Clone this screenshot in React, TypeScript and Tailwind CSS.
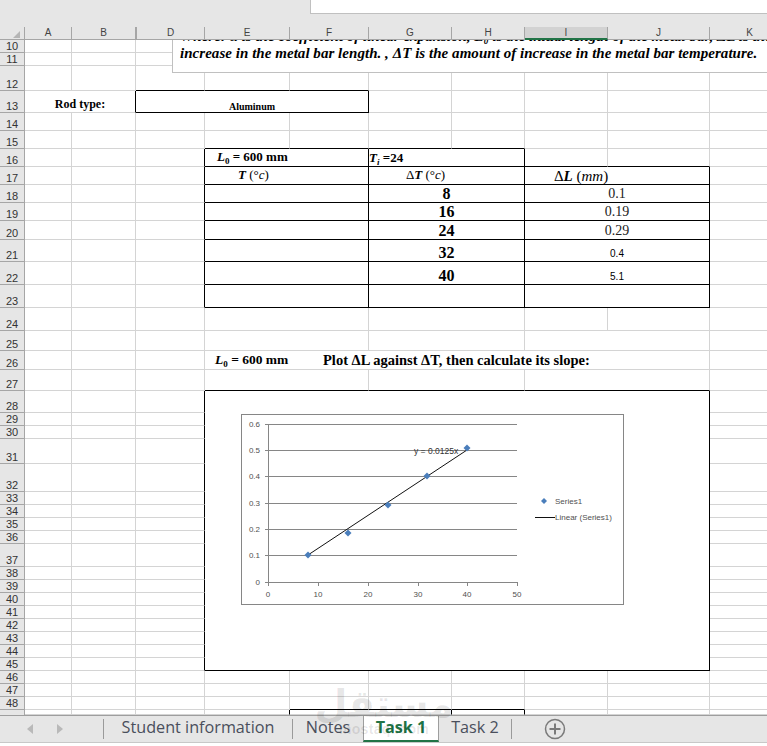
import React from "react";
import clsx from "clsx";

const serif = "font-['Liberation_Serif',serif]";
const columns = ["A", "B", "D", "E", "F", "G", "H", "I", "J", "K"];

const Cell = ({ className, children }: { className?: string; children?: React.ReactNode }) => (
  <div className={clsx("min-w-0 overflow-hidden border-r border-b border-[#d4d4d4]", className)}>{children}</div>
);

const RowHead = ({ n }: { n: number }) => (
  <div className="flex items-end justify-center border-r border-b border-[#a6a6a6] bg-[#e6e6e6] text-[11px] leading-[12px] text-[#333]">
    {n}
  </div>
);

const PlainRow = ({ n }: { n: number }) => (
  <>
    <RowHead n={n} />
    {columns.map(c => (
      <Cell key={c} />
    ))}
  </>
);

const Sub0 = () => <span className="relative top-[3px] text-[9px] leading-none">0</span>;

const tableRows = [
  { n: 18, t: "8", dl: "0.1" },
  { n: 19, t: "16", dl: "0.19" },
  { n: 20, t: "24", dl: "0.29" },
  { n: 21, t: "32", dl: "0.4", small: true },
  { n: 22, t: "40", dl: "5.1", small: true },
  { n: 23, t: "", dl: "" },
];

const TableRow = ({ n, left, mid, right }: { n: number; left?: React.ReactNode; mid?: React.ReactNode; right?: React.ReactNode }) => (
  <>
    <RowHead n={n} />
    <Cell />
    <Cell />
    <Cell className="border-r-black" />
    <Cell className="col-span-2 flex items-end border-r-black border-b-black">{left}</Cell>
    <Cell className="col-span-2 flex items-end justify-center border-r-black border-b-black">{mid}</Cell>
    <Cell className="col-span-2 flex items-end justify-center border-r-black border-b-black">{right}</Cell>
    <Cell />
  </>
);

const Chart = () => {
  const yTicks = [
    { y: 10, l: "0.6" },
    { y: 36, l: "0.5" },
    { y: 62, l: "0.4" },
    { y: 89, l: "0.3" },
    { y: 115, l: "0.2" },
    { y: 141, l: "0.1" },
  ];
  const xTicks = [
    { x: 27, l: "0" },
    { x: 77, l: "10" },
    { x: 127, l: "20" },
    { x: 177, l: "30" },
    { x: 226, l: "40" },
    { x: 276, l: "50" },
  ];
  const points = [
    [67, 141],
    [107, 119],
    [147, 91],
    [186, 62],
    [226, 34],
  ];
  return (
    <div className="h-[191px] w-[383px] border border-[#868686] bg-white">
      <svg width="381" height="189" viewBox="1 1 381 189" className="block font-['Liberation_Sans',sans-serif]">
        {yTicks.map(t => (
          <g key={t.l}>
            <line x1="24" x2="276" y1={t.y + 0.5} y2={t.y + 0.5} stroke="#868686" />
            <text x="19" y={t.y + 3} textAnchor="end" fontSize="8" fill="#505050">
              {t.l}
            </text>
          </g>
        ))}
        <line x1="27.5" x2="27.5" y1="10" y2="168" stroke="#868686" />
        <line x1="24" x2="276" y1="168.5" y2="168.5" stroke="#868686" />
        <text x="19" y="171" textAnchor="end" fontSize="8" fill="#505050">
          0
        </text>
        {xTicks.map(t => (
          <g key={t.l}>
            <line x1={t.x + 0.5} x2={t.x + 0.5} y1="168" y2="172" stroke="#868686" />
            <text x={t.x} y="183" textAnchor="middle" fontSize="8" fill="#505050">
              {t.l}
            </text>
          </g>
        ))}
        <text x="173" y="40" fontSize="8.5" fill="#333">
          y = 0.0125x
        </text>
        <line x1="67" y1="141" x2="226" y2="36" stroke="#111" />
        {points.map(([x, y]) => (
          <polygon key={x} points={`${x},${y - 3.5} ${x + 3.5},${y} ${x},${y + 3.5} ${x - 3.5},${y}`} fill="#4a7ebb" />
        ))}
        <polygon points="303,84 306,87 303,90 300,87" fill="#4a7ebb" />
        <text x="314" y="90" fontSize="8" fill="#505050">
          Series1
        </text>
        <line x1="294" x2="314" y1="103.5" y2="103.5" stroke="#111" />
        <text x="314" y="106" fontSize="8" fill="#505050">
          Linear (Series1)
        </text>
      </svg>
    </div>
  );
};

const Tab = ({ label, className }: { label: string; className: string }) => (
  <div className={clsx("flex h-[20px] items-center justify-center border-r border-[#9a9a9a] pb-[3px] whitespace-nowrap", className)}>{label}</div>
);

export default function App() {
  const frameRows = Array.from({ length: 17 }, (_, i) => 29 + i);
  const lowerRows = [46, 47];
  return (
    <div className="relative h-[746px] w-[767px] overflow-hidden bg-white font-['Liberation_Sans',sans-serif]">
      {/* ribbon leftover and formula bar */}
      <div className="flex h-[27px] bg-[#e6e6e6]">
        <div className="ml-[310px] h-[14px] flex-1 border-b border-l border-[#c0c0c0] bg-white" />
      </div>

      <div className="relative grid h-[688px] grid-cols-[25px_47px_64px_69px_85px_79px_83px_73px_83px_102px_80px] grid-rows-[13px_13px_13px_25px_22px_18px_18px_18px_18px_18px_18px_19px_22px_23px_23px_23px_20px_19px_21px_22px_13px_13px_25px_28px_13px_13px_13px_13px_23px_13px_13px_13px_13px_13px_13px_13px_13px_13px_13px_13px_5px] overflow-hidden">
        {/* column headers */}
        <div className="relative z-10 flex items-end justify-end border-r border-b border-[#a6a6a6] bg-[#e6e6e6] pr-[4px] pb-[1px]">
          <div className="h-0 w-0 border-b-[7px] border-l-[7px] border-b-[#b5b5b5] border-l-transparent" />
        </div>
        {columns.map(c => (
          <div
            key={c}
            className={clsx(
              "relative z-10 flex items-center justify-center border-r border-[#a6a6a6] text-[10px] leading-none text-[#444]",
              c === "I" ? "border-b-2 border-b-[#217346] bg-[#d2d2d2]" : "border-b bg-[#e6e6e6]",
              c === "D" && "border-l",
            )}
          >
            {c}
          </div>
        ))}

        <PlainRow n={10} />
        <PlainRow n={11} />

        <RowHead n={12} />
        <Cell />
        <Cell />
        <Cell className="border-b-black" />
        <Cell className="border-b-black" />
        <Cell className="border-b-black" />
        <Cell />
        <Cell />
        <Cell />
        <Cell />
        <Cell />

        <RowHead n={13} />
        <Cell className={clsx("col-span-2 flex items-end justify-center border-r-black text-[12px] leading-[15px] font-bold text-black", serif)}>
          Rod type:
        </Cell>
        <Cell className={clsx("col-span-3 flex items-end justify-center border-r-black border-b-black text-[10px] leading-[10px] font-bold text-black", serif)}>
          Aluminum
        </Cell>
        <Cell />
        <Cell />
        <Cell />
        <Cell />
        <Cell />

        <PlainRow n={14} />

        <RowHead n={15} />
        <Cell />
        <Cell />
        <Cell />
        <Cell className="border-b-black" />
        <Cell className="border-b-black" />
        <Cell className="border-b-black" />
        <Cell className="border-b-black" />
        <Cell />
        <Cell />
        <Cell />

        <RowHead n={16} />
        <Cell />
        <Cell />
        <Cell className="border-r-black" />
        <Cell className={clsx("col-span-2 flex items-end border-r-black border-b-black pl-[12px] text-[13px] leading-[18px] font-bold whitespace-nowrap text-black", serif)}>
          <span>
            <i>L</i>
            <Sub0 /> = 600 mm
          </span>
        </Cell>
        <Cell className={clsx("col-span-2 flex items-end border-r-black border-b-black text-[13px] leading-[17px] font-bold whitespace-nowrap text-black", serif)}>
          <span>
            <i>T</i>
            <i className="relative top-[3px] text-[9px] leading-none">i</i> =24
          </span>
        </Cell>
        <Cell className="border-b-black" />
        <Cell className="border-b-black" />
        <Cell />

        <TableRow
          n={17}
          left={
            <span className={clsx("pb-px pl-[33px] text-[13px] leading-[17px] whitespace-nowrap text-black", serif)}>
              <b>
                <i>T</i>
              </b>{" "}
              (°<i>c</i>)
            </span>
          }
          mid={
            <span className={clsx("pr-[42px] pb-px text-[13px] leading-[17px] whitespace-nowrap text-black", serif)}>
              Δ
              <b>
                <i>T</i>
              </b>{" "}
              (°<i>c</i>)
            </span>
          }
          right={
            <span className={clsx("pr-[72px] text-[15px] leading-[16px] whitespace-nowrap text-black", serif)}>
              Δ
              <b>
                <i>L</i>
              </b>{" "}
              (<i>mm</i>)
            </span>
          }
        />

        {tableRows.map(r => (
          <TableRow
            key={r.n}
            n={r.n}
            mid={<span className={clsx("text-[16px] leading-[17px] font-bold text-black", serif)}>{r.t}</span>}
            right={
              r.small ? (
                <span className="pb-px text-[10px] leading-[12px] text-black">{r.dl}</span>
              ) : (
                <span className={clsx("text-[14px] leading-[17px] text-[#222]", serif)}>{r.dl}</span>
              )
            }
          />
        ))}

        <RowHead n={24} />
        <Cell />
        <Cell />
        <Cell />
        <Cell className="col-span-2" />
        <Cell className="col-span-2" />
        <Cell />
        <Cell />
        <Cell />

        <RowHead n={25} />
        <Cell />
        <Cell />
        <Cell />
        <Cell className="col-span-2" />
        <Cell className="col-span-2" />
        <Cell className="col-span-2" />
        <Cell />

        <RowHead n={26} />
        <Cell />
        <Cell />
        <Cell />
        <Cell className={clsx("col-span-6 flex items-end pl-[10px] text-[13.5px] leading-[18px] font-bold whitespace-nowrap text-black", serif)}>
          <span className="w-[108px]">
            <i>L</i>
            <Sub0 /> = 600 mm
          </span>
          <span className="text-[14.5px]">Plot ΔL against ΔT, then calculate its slope:</span>
        </Cell>
        <Cell />

        <RowHead n={27} />
        <Cell />
        <Cell />
        <Cell />
        <Cell className="col-span-2 border-b-black" />
        <Cell className="col-span-2 border-b-black" />
        <Cell className="col-span-2 border-b-black" />
        <Cell />

        <RowHead n={28} />
        <Cell />
        <Cell />
        <Cell className="border-r-black" />
        <div className="col-span-6 row-span-18 border-r border-b border-black pt-[23px] pl-[36px]">
          <Chart />
        </div>
        <Cell />

        {frameRows.map(n => (
          <React.Fragment key={n}>
            <RowHead n={n} />
            <Cell />
            <Cell />
            <Cell className="border-r-black" />
            <Cell />
          </React.Fragment>
        ))}

        {lowerRows.map(n => (
          <PlainRow key={n} n={n} />
        ))}

        <RowHead n={48} />
        <Cell />
        <Cell />
        <Cell />
        <Cell />
        <Cell className="border-b-black" />
        <Cell className="border-b-black" />
        <Cell className="border-b-black" />
        <Cell />
        <Cell />
        <Cell />

        <div className="border-r border-[#a6a6a6] bg-[#e6e6e6]" />
        <Cell />
        <Cell />
        <Cell />
        <Cell className="border-r-black" />
        <Cell className={clsx("col-span-2 border-r-black text-center text-[13px] leading-[17px] font-bold text-black", serif)}>Slope</Cell>
        <Cell className="border-r-black" />
        <Cell />
        <Cell />
        <Cell />

        {/* floating text box with the formula legend, cut by the headers */}
        <div className={clsx("absolute top-0 left-[172px] h-[46px] w-[640px] border-b border-l border-[#c0c0c0] bg-white pt-px pl-[7px] text-[15px] leading-[17px] font-bold whitespace-nowrap text-black italic", serif)}>
          <div>Where: α is the coefficient of linear expansion, L₀ is the initial length of the metal bar, ΔL is the</div>
          <div className="tracking-[0.04px]">increase in the metal bar length. , ΔT is the amount of increase in the metal bar temperature.</div>
        </div>
      </div>

      {/* sheet tabs */}
      <div className="h-[28px] border-t border-b border-t-[#9e9e9e] border-b-[#c8c8c8] bg-[#e6e6e6]">
        <div className="flex h-[26px] items-center font-['Open_Sans',sans-serif] text-[16.2px] text-[#4a4f5c]">
          <div className="flex w-[103px] items-center gap-[24px] pl-[27px]">
            <svg width="6" height="10" viewBox="0 0 6 10">
              <polygon points="6,0 0,5 6,10" fill="#b9b9b9" />
            </svg>
            <svg width="6" height="10" viewBox="0 0 6 10">
              <polygon points="0,0 6,5 0,10" fill="#b9b9b9" />
            </svg>
          </div>
          <div className="h-[20px] w-px bg-[#9a9a9a]" />
          <Tab label="Student information" className="w-[189px]" />
          <Tab label="Notes" className="w-[70px] border-r-0" />
          <div className="flex h-[26px] w-[76px] items-center justify-center self-start border-r border-b-2 border-l border-r-[#9e9e9e] border-b-[#217346] border-l-[#9e9e9e] bg-white pb-[2px] font-bold text-[#217346]">
            Task 1
          </div>
          <Tab label="Task 2" className="w-[73px]" />
          <svg width="22" height="22" viewBox="0 0 22 22" className="ml-[32px]">
            <circle cx="11" cy="11" r="9.5" fill="none" stroke="#7a7a7a" strokeWidth="1.5" />
            <path d="M11 5.5v11M5.5 11h11" stroke="#7a7a7a" strokeWidth="2" />
          </svg>
        </div>
      </div>

      {/* site watermark over the screenshot */}
      <div className="pointer-events-none absolute top-[686px] left-[338px] flex w-[92px] flex-col items-center text-black/10">
        <span dir="rtl" className="font-['DejaVu_Sans',sans-serif] text-[38px] leading-[36px] font-bold">
          مستقل
        </span>
        <span className="text-[14px] leading-[14px] font-bold tracking-wide">mostaql.com</span>
      </div>
    </div>
  );
}
